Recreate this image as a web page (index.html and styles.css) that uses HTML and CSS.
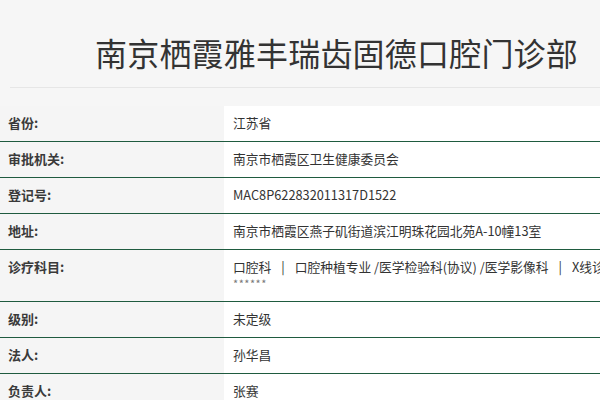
FILE: index.html
```html
<!DOCTYPE html>
<html lang="zh-CN">
<head>
<meta charset="utf-8">
<title>南京栖霞雅丰瑞齿固德口腔门诊部</title>
<link rel="stylesheet" href="styles.css">
</head>
<body>
<div class="page">
  <header class="head">
    <h1 class="title">南京栖霞雅丰瑞齿固德口腔门诊部</h1>
  </header>
  <div class="info">
    <div class="row"><div class="label">省份:</div><div class="value">江苏省</div></div>
    <div class="row"><div class="label">审批机关:</div><div class="value">南京市栖霞区卫生健康委员会</div></div>
    <div class="row"><div class="label">登记号:</div><div class="value">MAC8P622832011317D1522</div></div>
    <div class="row"><div class="label">地址:</div><div class="value">南京市栖霞区燕子矶街道滨江明珠花园北苑A-10幢13室</div></div>
    <div class="row"><div class="label">诊疗科目:</div><div class="value"><span class="line">口腔科<span class="sep">|</span>口腔种植专业 /医学检验科(协议) /医学影像科<span class="sep">|</span>X线诊断专业</span><span class="mask">******</span></div></div>
    <div class="row"><div class="label">级别:</div><div class="value">未定级</div></div>
    <div class="row"><div class="label">法人:</div><div class="value">孙华昌</div></div>
    <div class="row"><div class="label">负责人:</div><div class="value">张赛</div></div>
  </div>
</div>
</body>
</html>
```

FILE: styles.css
```css
html, body {
  margin: 0;
  padding: 0;
  background: #f6f6f6;
  overflow: hidden;
}
body {
  font-family: "Noto Sans CJK SC", "Noto Sans", sans-serif;
  color: #333;
}
.page {
  width: 820px;
}
.head {
  margin-left: 10px;
  padding: 32px 0 15px 85px;
  border-bottom: 1px solid #e6e6e6;
}
.title {
  margin: 0;
  font-size: 32px;
  line-height: 40px;
  font-weight: 400;
  color: #333;
  letter-spacing: 0.2px;
  white-space: nowrap;
}
.info {
  margin-top: 18px;
}
.row {
  display: grid;
  grid-template-columns: 224px 1fr;
  border-bottom: 1px solid #1f5b3f;
}
.label {
  padding: 9px 0 10px 8px;
  font-size: 13px;
  line-height: 16px;
  font-weight: 700;
  color: #3a3a3a;
  background: #f5f5f5;
}
.value {
  padding: 9px 0 10px 9px;
  font-size: 12.75px;
  line-height: 16px;
  color: #333;
  background: #fff;
}
.line {
  display: block;
  white-space: nowrap;
}
.sep {
  margin: 0 10px;
}
.mask {
  display: block;
  font-size: 11px;
  line-height: 16px;
  color: #777;
  letter-spacing: 0.5px;
}
```
